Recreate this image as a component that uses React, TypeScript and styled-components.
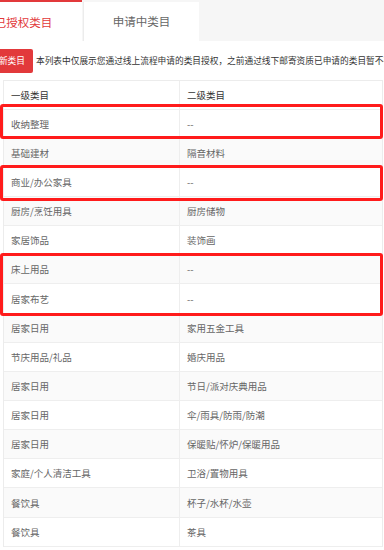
import React from "react";
import styled, { createGlobalStyle } from "styled-components";

const Global = createGlobalStyle`
  html, body { margin: 0; padding: 0; background: #fff; overflow: hidden; }
  body { font-family: "Noto Sans CJK SC", "Noto Sans", sans-serif; }
`;

const Page = styled.div`
  margin-left: -35px;
  width: 419px;
`;

const TabBar = styled.div`
  display: flex;
  height: 41px;
  background: #f6f6f6;
`;

const Tab = styled.div<{ $active?: boolean }>`
  box-sizing: border-box;
  width: ${(p) => (p.$active ? "117px" : "116px")};
  margin-left: ${(p) => (p.$active ? "0" : "1px")};
  margin-top: ${(p) => (p.$active ? "0" : "2px")};
  height: ${(p) => (p.$active ? "41px" : "39px")};
  background: #fff;
  border-top: ${(p) => (p.$active ? "2px solid #e2393b" : "none")};
  border-left: ${(p) => (p.$active ? "none" : "1px solid #ececec")};
  display: flex;
  align-items: center;
  justify-content: center;
  font-size: 11.5px;
  color: ${(p) => (p.$active ? "#e2393b" : "#666")};
  padding-bottom: ${(p) => (p.$active ? "0" : "1px")};
`;

const Toolbar = styled.div`
  display: flex;
  align-items: center;
  gap: 3px;
  margin-top: 7.5px;
  padding-left: 8.5px;
  height: 24px;
  white-space: nowrap;
`;

const AddButton = styled.div`
  height: 24px;
  padding: 0 8px;
  display: flex;
  align-items: center;
  background: #e2393b;
  border-radius: 2px;
  color: #fff;
  font-size: 8.7px;
  flex-shrink: 0;
`;

const Notice = styled.span`
  font-size: 8.7px;
  color: #333;
`;

const Table = styled.div`
  position: relative;
  margin: 7px 0 0 38px;
  width: 380px;
  border: 1px solid #ececec;
  border-bottom: none;
  box-sizing: border-box;
`;

const Row = styled.div<{ $alt?: boolean; $head?: boolean }>`
  display: grid;
  grid-template-columns: 176px 1fr;
  height: 29.15px;
  box-sizing: border-box;
  border-bottom: 1px solid #eeeeee;
  background: ${(p) => (p.$alt ? "#fafafa" : "#fff")};
  color: ${(p) => (p.$head ? "#333" : "#666")};
  font-size: 9.5px;
`;

const Cell = styled.div<{ $first?: boolean }>`
  display: flex;
  align-items: center;
  padding-left: ${(p) => (p.$first ? "7px" : "7px")};
  border-right: ${(p) => (p.$first ? "1px solid #eeeeee" : "none")};
  white-space: nowrap;
`;

const Highlight = styled.div<{ $top: number; $height: number }>`
  position: absolute;
  left: -4px;
  width: 383px;
  top: ${(p) => p.$top}px;
  height: ${(p) => p.$height}px;
  box-sizing: border-box;
  border: 3.5px solid #ff1b1b;
  border-radius: 3px;
  pointer-events: none;
`;

const rows: [string, string][] = [
  ["收纳整理", "--"],
  ["基础建材", "隔音材料"],
  ["商业/办公家具", "--"],
  ["厨房/烹饪用具", "厨房储物"],
  ["家居饰品", "装饰画"],
  ["床上用品", "--"],
  ["居家布艺", "--"],
  ["居家日用", "家用五金工具"],
  ["节庆用品/礼品", "婚庆用品"],
  ["居家日用", "节日/派对庆典用品"],
  ["居家日用", "伞/雨具/防雨/防潮"],
  ["居家日用", "保暖贴/怀炉/保暖用品"],
  ["家庭/个人清洁工具", "卫浴/置物用具"],
  ["餐饮具", "杯子/水杯/水壶"],
  ["餐饮具", "茶具"],
];

export default function App() {
  return (
    <>
      <Global />
      <Page>
        <TabBar>
          <Tab $active>已授权类目</Tab>
          <Tab>申请中类目</Tab>
        </TabBar>
        <Toolbar>
          <AddButton>申请新类目</AddButton>
          <Notice>
            本列表中仅展示您通过线上流程申请的类目授权，之前通过线下邮寄资质已申请的类目暂不在此展示
          </Notice>
        </Toolbar>
        <Table>
          <Row $head>
            <Cell $first>一级类目</Cell>
            <Cell>二级类目</Cell>
          </Row>
          {rows.map(([a, b], i) => (
            <Row key={i} $alt={i % 2 === 1}>
              <Cell $first>{a}</Cell>
              <Cell>{b}</Cell>
            </Row>
          ))}
          <Highlight $top={23} $height={35} />
          <Highlight $top={84} $height={36} />
          <Highlight $top={172} $height={63} />
        </Table>
      </Page>
    </>
  );
}
